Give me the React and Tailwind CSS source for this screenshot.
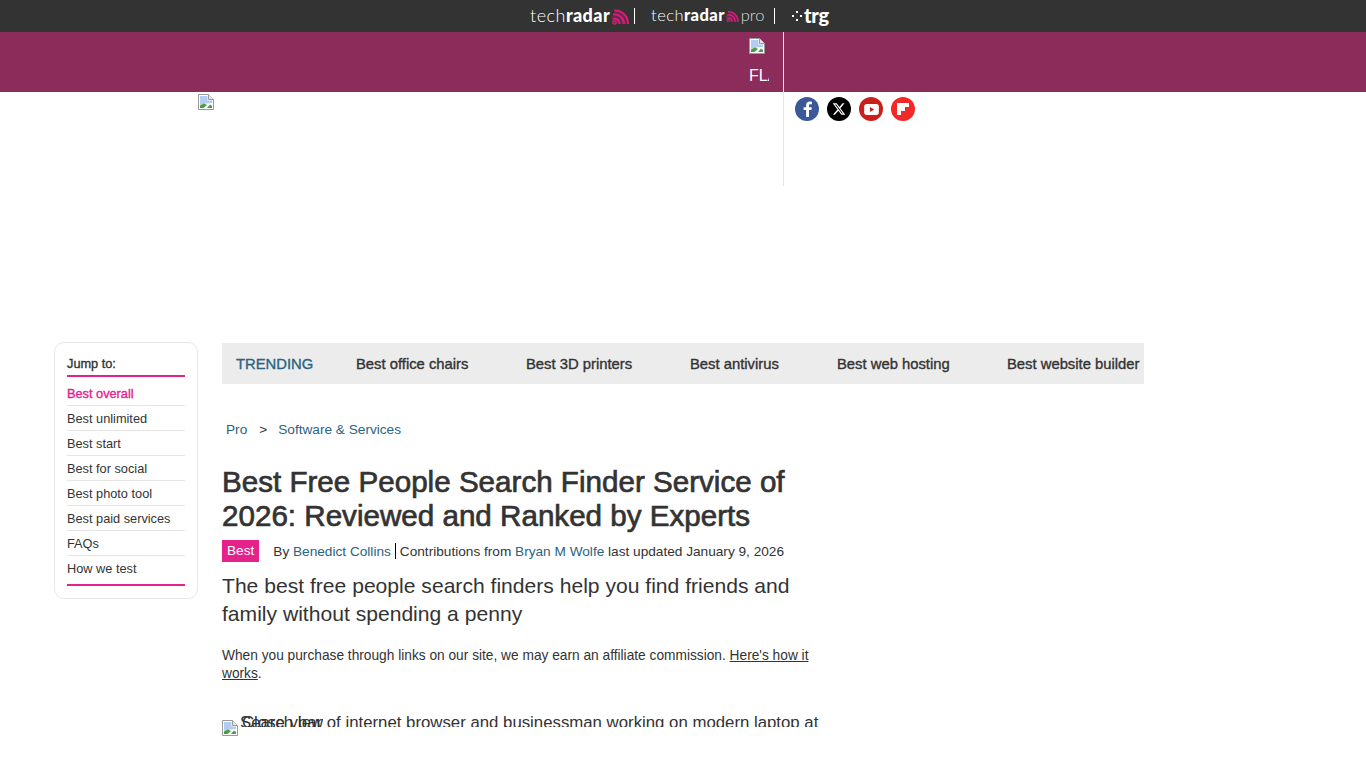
const sidebarLinks = ['Best unlimited', 'Best start', 'Best for social', 'Best photo tool', 'Best paid services', 'FAQs', 'How we test'];
const trending = [
  ['Best office chairs', 'w-[170px]'],
  ['Best 3D printers', 'w-[164px]'],
  ['Best antivirus', 'w-[147px]'],
  ['Best web hosting', 'w-[170px]'],
  ['Best website builder', 'w-[137px]'],
];

function BrokenImage({ className = '' }) {
  return (
    <svg width="16" height="16" viewBox="0 0 16 16" className={className}>
      <path d="M0.5 0.5H10.5L15.5 5.5V15.5H0.5Z" fill="#fff" stroke="#9a9a9a" />
      <path d="M10.5 0.5V5.5H15.5" fill="#e8e8e8" stroke="#9a9a9a" />
      <path d="M2 2H9.5V6.5H14V9L8 9.5L2 11Z" fill="#b3ccf2" />
      <path d="M2 14V11.5L6 9.5L9 11L5.5 14Z" fill="#46a035" />
      <path d="M9 14L12 10.5L14 12V14Z" fill="#5f8f52" />
    </svg>
  );
}

function Waves({ size = 19 }) {
  return (
    <svg width={size} height={size * 17 / 19} viewBox="0 0 19 17" fill="none" className="shrink-0">
      <path d="M1 9L8 1.5L15 5L18 16H2Z" fill="#e0187e" opacity="0.3" />
      <path d="M3 11A5 5 0 0 1 9.5 16" stroke="#e0187e" strokeWidth="2" />
      <path d="M3 6.5A9.5 9.5 0 0 1 14 16" stroke="#e0187e" strokeWidth="2" />
      <path d="M4 2.5A13 13 0 0 1 18 16" stroke="#e0187e" strokeWidth="2" />
      <circle cx="4.5" cy="14.5" r="1.6" stroke="#e0187e" strokeWidth="1.2" />
    </svg>
  );
}

export default function App() {
  return (
    <div className="h-[768px] overflow-hidden bg-white font-['Liberation_Sans',Arial,sans-serif] text-[#333]">
      <div className="flex h-8 items-center bg-[#333] pl-[530px] font-['Lato',sans-serif] leading-none text-white">
        <div className="flex w-[98px] items-center text-[18px]">
          <span className="-mt-[3px] font-light tracking-[0.5px]">tech</span>
          <span className="-mt-[3px] font-black tracking-[0.4px]">radar</span>
          <Waves />
        </div>
        <span className="ml-[6px] h-4 w-px bg-white" />
        <div className="ml-4 flex w-[112px] items-center text-[16.5px]">
          <span className="-mt-px font-light tracking-[0.5px]">tech</span>
          <span className="-mt-px font-black tracking-[0.4px]">radar</span>
          <Waves size={14} />
          <span className="-mt-px ml-[2px] font-light text-[#ddd]">pro</span>
        </div>
        <span className="ml-[11px] h-4 w-px bg-white" />
        <div className="ml-[17px] flex items-center gap-[2px]">
          <svg width="10" height="10" viewBox="0 0 10 10" fill="#fff">
            <rect x="4" y="0" width="2" height="2" />
            <rect x="0" y="4" width="2" height="2" />
            <rect x="8" y="4" width="2" height="2" />
            <rect x="4" y="8" width="2" height="2" />
          </svg>
          <span className="-mt-[3px] text-[20px] font-black tracking-[-0.3px]">trg</span>
        </div>
      </div>

      <div className="flex h-[60px] bg-[#8b2c5b]">
        <div className="ml-[749px] w-[20px] overflow-hidden pt-[6px] text-[16px] text-white">
          <BrokenImage />
          <div className="mt-[14px] leading-4">FLASH</div>
        </div>
        <div className="ml-[14px] w-px bg-[#e6e6e6]" />
      </div>

      <div className="flex h-[94px] pl-[198px]">
        <BrokenImage className="mt-[2px]" />
        <div className="ml-[569px] w-px bg-[#e6e6e6]" />
        <div className="ml-[11px] mt-[5px] flex h-6 gap-2">
          <span className="flex h-6 w-6 items-center justify-center rounded-full bg-[#3b5998]">
            <svg width="9" height="16" viewBox="0 0 9 16" fill="#fff">
              <path d="M6 16V9H8.4L8.8 6.2H6V4.5C6 3.7 6.3 3.2 7.4 3.2H8.9V0.7C8.6 0.7 7.8 0.6 6.8 0.6C4.6 0.6 3.1 1.9 3.1 4.2V6.2H0.6V9H3.1V16Z" />
            </svg>
          </span>
          <span className="flex h-6 w-6 items-center justify-center rounded-full bg-black">
            <svg width="14" height="14" viewBox="0 0 24 24" fill="#fff">
              <path d="M18.2 2.2H21.5L14.3 10.5L22.8 21.8H16.1L10.9 15L4.9 21.8H1.6L9.3 13L1.2 2.2H8L12.7 8.5ZM17 19.8H18.8L7.1 4.1H5.1Z" />
            </svg>
          </span>
          <span className="flex h-6 w-6 items-center justify-center rounded-full bg-[#c9201c]">
            <svg width="15" height="11" viewBox="0 0 16 12">
              <rect width="16" height="12" rx="3" fill="#fff" />
              <path d="M6.3 3.2L11 6L6.3 8.8Z" fill="#c9201c" />
            </svg>
          </span>
          <span className="flex h-6 w-6 items-center justify-center rounded-full bg-[#f52828]">
            <svg width="12" height="12" viewBox="0 0 12 12" fill="#fff">
              <path d="M0 0H12V4H8V8H4V12H0Z" />
            </svg>
          </span>
        </div>
      </div>

      <div className="mt-[157px] flex items-start pl-[54px]">
        <nav className="-mt-px h-[257px] w-[144px] rounded-[10px] border border-[#e8e8e8] px-3 pt-3 text-[12.75px] leading-[18px]">
          <div className="border-b-2 border-[#e5218c] pb-[2px] [-webkit-text-stroke:0.35px_currentColor]">Jump to:</div>
          <ul className="border-b-2 border-[#e5218c]">
            <li className="h-[29px] border-b border-[#e5e5e5] pt-2 text-[#e5218c] [-webkit-text-stroke:0.35px_currentColor]">Best overall</li>
            {sidebarLinks.map((link, i) => (
              <li key={link} className={i < 6 ? 'flex h-[25px] items-center border-b border-[#e5e5e5] pt-[2px]' : 'h-[28px] pt-1'}>{link}</li>
            ))}
          </ul>
        </nav>

        <main className="ml-6 w-[922px]">
          <div className="flex h-[41px] items-center bg-[#ececec] pl-[14px] pt-px text-[14.8px] [-webkit-text-stroke:0.35px_currentColor]">
            <span className="w-[120px] text-[#2a6482]">TRENDING</span>
            {trending.map(([label, width]) => (
              <span key={label} className={`whitespace-nowrap ${width}`}>{label}</span>
            ))}
          </div>

          <div className="mt-[37px] pl-1 text-[13.65px] leading-[18px] text-[#2a6482]">
            Pro<span className="ml-3 mr-[11px] text-[#333]">&gt;</span>Software &amp; Services
          </div>

          <div className="w-[600px]">
            <h1 className="mt-[26px] text-[29.6px] font-normal leading-[34px] [-webkit-text-stroke:0.7px_currentColor]">
              Best Free People Search Finder Service of 2026: Reviewed and Ranked by Experts
            </h1>
            <div className="mt-[7px] flex h-[22px] items-center text-[13.65px]">
              <span className="bg-[#e5218c] px-[5px] leading-[22px] text-white">Best</span>
              <span className="ml-[14px] pt-[2px]">By <span className="text-[#2a6482]">Benedict Collins</span></span>
              <span className="mx-1 h-4 w-px bg-black" />
              <span className="pt-[2px]">Contributions from <span className="text-[#2a6482]">Bryan M Wolfe</span> last updated January 9, 2026</span>
            </div>
            <p className="mt-[10px] text-[21.1px] leading-[28px]">
              The best free people search finders help you find friends and family without spending a penny
            </p>
            <p className="mt-[19px] text-[13.72px] leading-[18px]">
              When you purchase through links on our site, we may earn an affiliate commission. <span className="underline">Here's how it works</span>.
            </p>
            <div className="relative mt-[28px] h-4 text-[16.8px] leading-[20px]">
              <BrokenImage className="absolute left-0 top-[9px]" />
              <div className="h-4 overflow-hidden whitespace-nowrap pl-[18px] pt-[2px]">
                Search bar of internet browser and businessman working on modern laptop at
              </div>
              <div className="absolute left-[20px] top-0 h-4 overflow-hidden whitespace-nowrap pt-[2px]">Close view</div>
            </div>
          </div>
        </main>
      </div>
    </div>
  );
}
